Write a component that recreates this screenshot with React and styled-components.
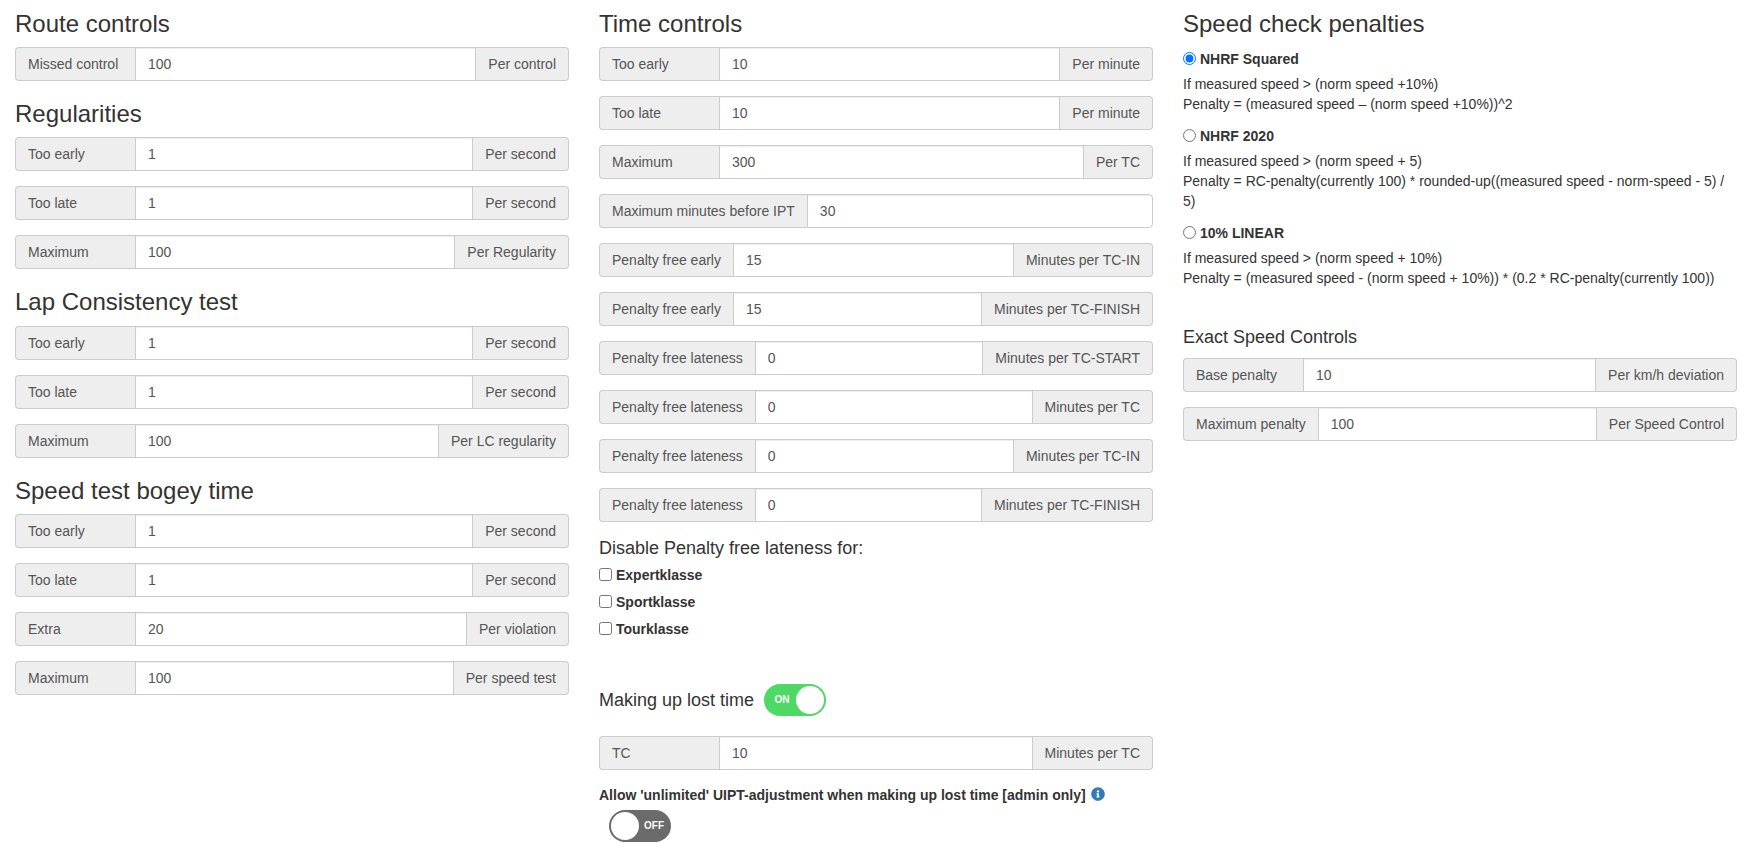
import React from "react";
import styled, { createGlobalStyle } from "styled-components";
import { FaInfoCircle } from "react-icons/fa";

const GlobalStyle = createGlobalStyle`
  * { box-sizing: border-box; }
  body {
    margin: 0;
    background: #fff;
    color: #333;
    font-family: "Liberation Sans", Arial, sans-serif;
    font-size: 14px;
    line-height: 20px;
  }
`;

const routeRows = [{ label: "Missed control", value: "100", unit: "Per control" }];
const regularityRows = [
  { label: "Too early", value: "1", unit: "Per second" },
  { label: "Too late", value: "1", unit: "Per second" },
  { label: "Maximum", value: "100", unit: "Per Regularity" },
];
const lapRows = [
  { label: "Too early", value: "1", unit: "Per second" },
  { label: "Too late", value: "1", unit: "Per second" },
  { label: "Maximum", value: "100", unit: "Per LC regularity" },
];
const speedRows = [
  { label: "Too early", value: "1", unit: "Per second" },
  { label: "Too late", value: "1", unit: "Per second" },
  { label: "Extra", value: "20", unit: "Per violation" },
  { label: "Maximum", value: "100", unit: "Per speed test" },
];
const timeRows = [
  { label: "Too early", value: "10", unit: "Per minute" },
  { label: "Too late", value: "10", unit: "Per minute" },
  { label: "Maximum", value: "300", unit: "Per TC" },
  { label: "Maximum minutes before IPT", value: "30" },
  { label: "Penalty free early", value: "15", unit: "Minutes per TC-IN" },
  { label: "Penalty free early", value: "15", unit: "Minutes per TC-FINISH" },
  { label: "Penalty free lateness", value: "0", unit: "Minutes per TC-START" },
  { label: "Penalty free lateness", value: "0", unit: "Minutes per TC" },
  { label: "Penalty free lateness", value: "0", unit: "Minutes per TC-IN" },
  { label: "Penalty free lateness", value: "0", unit: "Minutes per TC-FINISH" },
];
const exactRows = [
  { label: "Base penalty", value: "10", unit: "Per km/h deviation" },
  { label: "Maximum penalty", value: "100", unit: "Per Speed Control" },
];
const classes = ["Expertklasse", "Sportklasse", "Tourklasse"];
const penalties = [
  {
    name: "NHRF Squared",
    checked: true,
    lines: ["If measured speed > (norm speed +10%)", "Penalty = (measured speed – (norm speed +10%))^2"],
  },
  {
    name: "NHRF 2020",
    lines: [
      "If measured speed > (norm speed + 5)",
      "Penalty = RC-penalty(currently 100) * rounded-up((measured speed - norm-speed - 5) / 5)",
    ],
  },
  {
    name: "10% LINEAR",
    lines: [
      "If measured speed > (norm speed + 10%)",
      "Penalty = (measured speed - (norm speed + 10%)) * (0.2 * RC-penalty(currently 100))",
    ],
  },
];

function FieldRows({ rows }) {
  return rows.map((row, i) => (
    <InputGroup key={i}>
      <Addon $side="left">{row.label}</Addon>
      <ValueInput readOnly defaultValue={row.value} $alone={!row.unit} />
      {row.unit && <Addon $side="right">{row.unit}</Addon>}
    </InputGroup>
  ));
}

function App() {
  return (
    <Page>
      <GlobalStyle />
      <Column>
        <Heading>Route controls</Heading>
        <FieldRows rows={routeRows} />
        <Heading>Regularities</Heading>
        <FieldRows rows={regularityRows} />
        <Heading>Lap Consistency test</Heading>
        <FieldRows rows={lapRows} />
        <Heading>Speed test bogey time</Heading>
        <FieldRows rows={speedRows} />
      </Column>

      <Column>
        <Heading>Time controls</Heading>
        <FieldRows rows={timeRows} />
        <SubLabel>Disable Penalty free lateness for:</SubLabel>
        <CheckList>
          {classes.map((name) => (
            <CheckRow key={name}>
              <input type="checkbox" />
              {name}
            </CheckRow>
          ))}
        </CheckList>
        <ToggleLine>
          <ToggleTitle>Making up lost time</ToggleTitle>
          <Toggle $on>
            <ToggleText $on>ON</ToggleText>
            <Knob />
          </Toggle>
        </ToggleLine>
        <FieldRows rows={[{ label: "TC", value: "10", unit: "Minutes per TC" }]} />
        <AdminLine>
          Allow 'unlimited' UIPT-adjustment when making up lost time [admin only]
          <InfoIcon />
        </AdminLine>
        <OffToggleWrap>
          <Toggle>
            <Knob />
            <ToggleText>OFF</ToggleText>
          </Toggle>
        </OffToggleWrap>
      </Column>

      <Column>
        <Heading>Speed check penalties</Heading>
        <PenaltyList>
          {penalties.map((item) => (
            <div key={item.name}>
              <RadioRow>
                <input type="radio" name="penalty" defaultChecked={item.checked} />
                {item.name}
              </RadioRow>
              <PenaltyText>
                {item.lines.map((line) => (
                  <div key={line}>{line}</div>
                ))}
              </PenaltyText>
            </div>
          ))}
        </PenaltyList>
        <SmallHeading>Exact Speed Controls</SmallHeading>
        <FieldRows rows={exactRows} />
      </Column>
    </Page>
  );
}

const Page = styled.div`
  display: grid;
  grid-template-columns: repeat(3, 554px);
  column-gap: 30px;
  padding: 0 15px;
`;

const Column = styled.div`
  min-width: 0;
`;

const Heading = styled.h3`
  margin: 20px 0 10px;
  font-size: 24px;
  font-weight: 500;
  line-height: 26.4px;
  color: #333;

  &:first-child {
    margin-top: 10.6px;
  }
`;

const SmallHeading = styled.h4`
  margin: 39px 0 11px;
  font-size: 18px;
  font-weight: 500;
  line-height: 20px;
  color: #333;
`;

const InputGroup = styled.div`
  display: flex;
  height: 34px;
  margin-bottom: 15px;
`;

const Addon = styled.span`
  display: flex;
  align-items: center;
  flex: none;
  padding: 6px 12px;
  background: #eee;
  border: 1px solid #ccc;
  color: #555;
  white-space: nowrap;
  min-width: ${(p) => (p.$side === "left" ? "120px" : "0")};
  border-radius: ${(p) => (p.$side === "left" ? "4px 0 0 4px" : "0 4px 4px 0")};
  ${(p) => (p.$side === "left" ? "border-right: 0;" : "border-left: 0;")}
`;

const ValueInput = styled.input`
  flex: 1;
  min-width: 0;
  padding: 6px 12px;
  border: 1px solid #ccc;
  border-radius: ${(p) => (p.$alone ? "0 4px 4px 0" : "0")};
  box-shadow: inset 0 1px 1px rgba(0, 0, 0, 0.075);
  background: #fff;
  color: #555;
  font: inherit;
  outline: none;
`;

const SubLabel = styled.div`
  font-size: 18px;
  line-height: 23px;
`;

const CheckList = styled.div`
  display: flex;
  flex-direction: column;
  gap: 7px;
  margin-top: 5px;
`;

const CheckRow = styled.label`
  display: flex;
  align-items: center;
  gap: 3px;
  height: 20px;
  font-weight: 700;

  input {
    margin: 0 1px 0 0;
    width: 13px;
    height: 13px;
    position: relative;
    top: -1px;
  }
`;

const ToggleLine = styled.div`
  display: flex;
  align-items: center;
  gap: 10px;
  height: 32px;
  margin: 45px 0 20px;
`;

const ToggleTitle = styled.span`
  font-size: 18px;
`;

const Toggle = styled.div`
  display: flex;
  align-items: center;
  justify-content: space-between;
  width: 62px;
  height: 32px;
  padding: 2px;
  border-radius: 16px;
  background: ${(p) => (p.$on ? "#4cd964" : "#6b6b6b")};
`;

const Knob = styled.span`
  width: 28px;
  height: 28px;
  border-radius: 50%;
  background: #fff;
`;

const ToggleText = styled.span`
  flex: 1;
  padding-left: ${(p) => (p.$on ? "2px" : "0")};
  text-align: center;
  color: #fff;
  font-size: 10px;
  font-weight: 700;
`;

const AdminLine = styled.div`
  font-weight: 700;
  line-height: 20px;
`;

const InfoIcon = styled(FaInfoCircle)`
  margin-left: 5px;
  width: 14px;
  height: 14px;
  vertical-align: -1px;
  color: #337ab7;
`;

const OffToggleWrap = styled.div`
  margin: 5px 0 0 10px;
`;

const PenaltyList = styled.div`
  display: flex;
  flex-direction: column;
  gap: 12px;
  margin-top: 12px;
`;

const RadioRow = styled.label`
  display: flex;
  align-items: center;
  gap: 4px;
  height: 20px;
  margin-bottom: 5px;
  font-weight: 700;

  input {
    margin: 0;
    width: 13px;
    height: 13px;
    position: relative;
    top: -1px;
  }
`;

const PenaltyText = styled.div`
  color: #333;
`;

export default App;
